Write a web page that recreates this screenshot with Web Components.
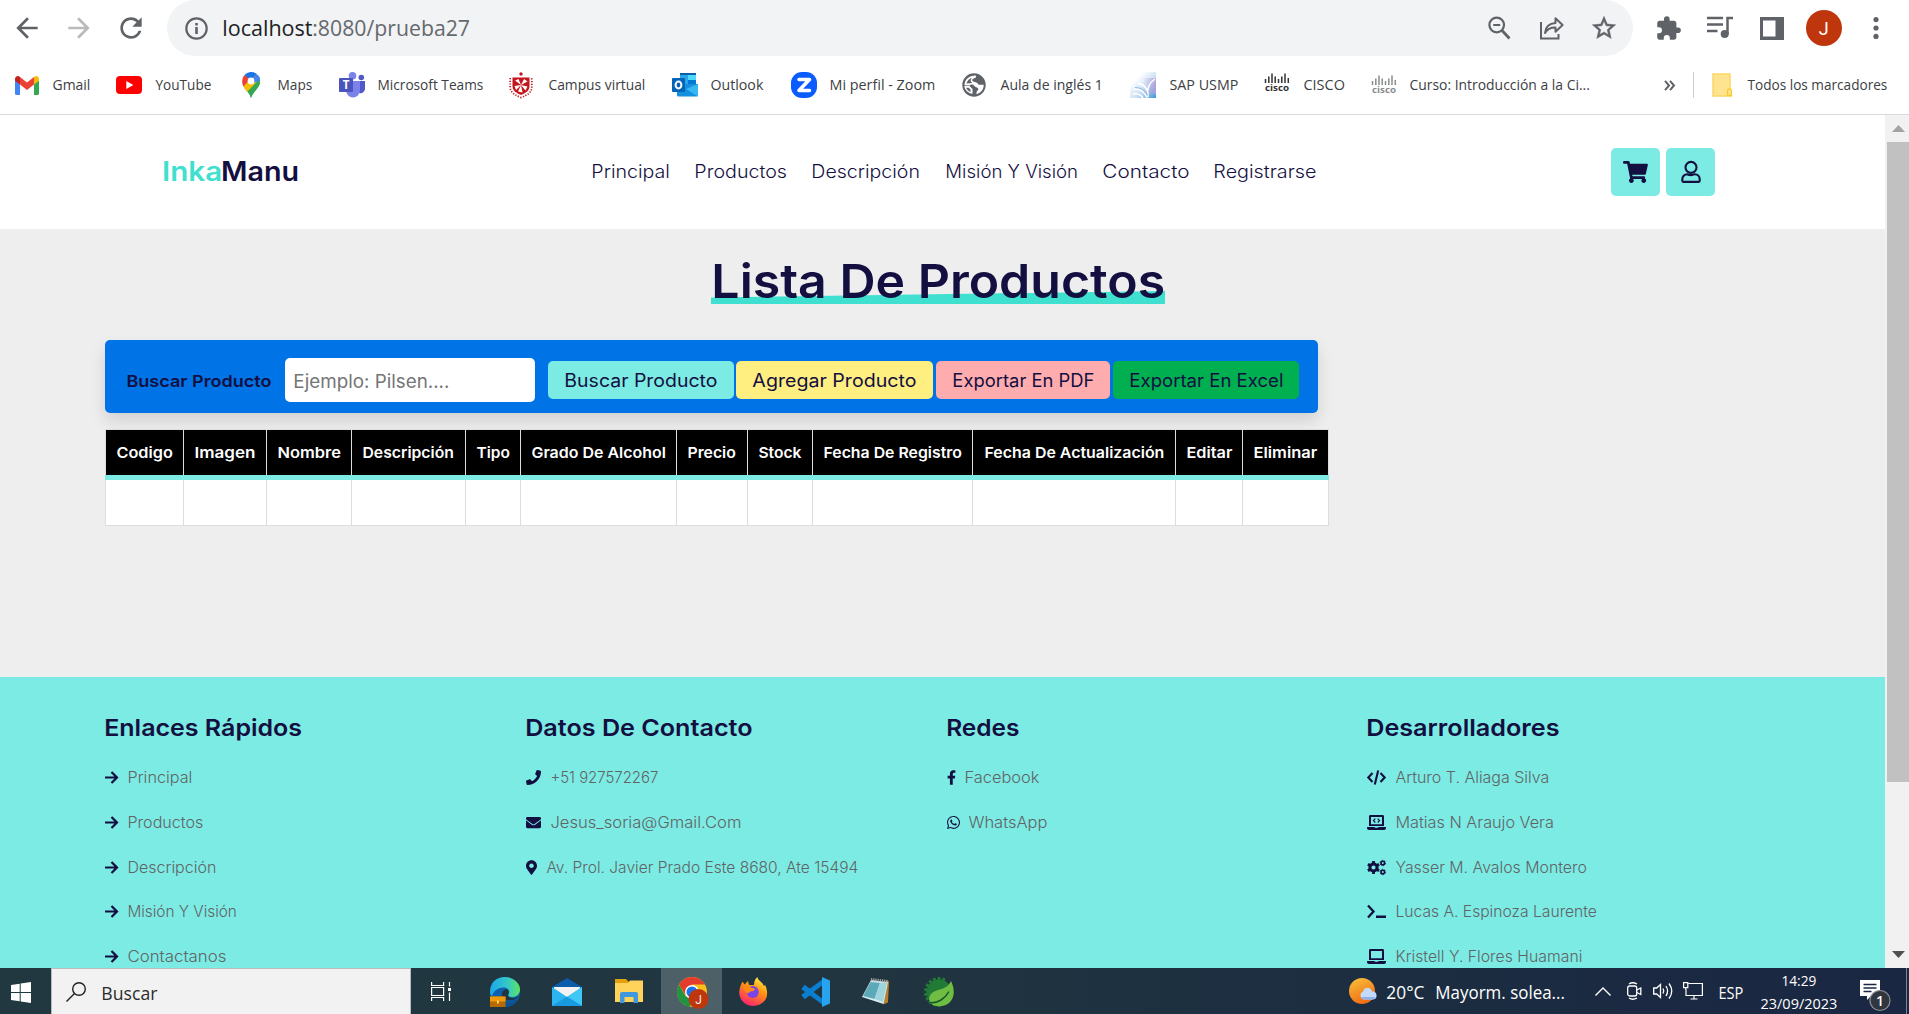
<!DOCTYPE html>
<html lang="es">
<head>
<meta charset="utf-8">
<title>InkaManu - Lista de productos</title>
<style>
html,body{margin:0;padding:0;height:100%;overflow:hidden;background:#fff}
</style>
</head>
<body>
<desktop-screen></desktop-screen>
<script>
const svg=(w,h,vb,body,extra='')=>`<svg width="${w}" height="${h}" viewBox="${vb}" ${extra} style="display:block;overflow:visible">${body}</svg>`;
const t=(w,text,style='')=>`<fit-text w="${w}" style="${style}">${text}</fit-text>`;
/* lays out [start, width, html] entries in a flex row, spacing each from the previous one */
const row=(items,from=0)=>{let end=from;return items.map(([x,w,html])=>{const m=x-end;end=x+w;return `<div style="flex:none;margin-left:${m.toFixed(2)}px;width:${w}px">${html}</div>`}).join('')};
const define=(name,css,html)=>customElements.define(name,class extends HTMLElement{
  connectedCallback(){ if(this.shadowRoot) return;
    this.attachShadow({mode:'open'}).innerHTML=`<style>*{box-sizing:border-box}${css}</style>${typeof html==='function'?html(this):html}`;}
});

/* one line of text whose glyphs are stretched or narrowed to the given width */
customElements.define('fit-text',class extends HTMLElement{
  connectedCallback(){ if(this.shadowRoot) return;
    const r=this.attachShadow({mode:'open'});
    r.innerHTML=`<style>:host{display:block;white-space:nowrap;flex:none}span{display:inline-block;white-space:pre;transform-origin:0 50%}</style><span><slot></slot></span>`;
    const w=parseFloat(this.getAttribute('w')),s=r.querySelector('span');
    this.style.width=w+'px';
    const size=parseFloat(getComputedStyle(this).fontSize),bear=size*.035;
    const nat=s.getBoundingClientRect().width;
    s.style.transform=`translateX(${-bear}px) scaleX(${((w+bear*1.7)/nat).toFixed(4)})`;
  }
});

/* ---------- browser toolbar ---------- */
const G='#5f6368';
const back='M20 11H7.83l5.59-5.59L12 4l-8 8 8 8 1.41-1.41L7.83 13H20v-2z';
define('browser-toolbar',`
:host{display:flex;height:56px;align-items:center;background:#fff;font-family:"Open Sans",sans-serif}
.pill{display:flex;align-items:center;flex:none;margin-left:20px;width:1466px;height:56px;border-radius:28px;background:#f1f3f4}
.url{display:flex;font-size:21.500px;line-height:30px;color:#202124}
.avatar{width:36px;height:36px;border-radius:50%;background:#bf360c;color:#fff;display:flex;align-items:center;justify-content:center;font:18px Roboto,sans-serif}
`,`
${row([
 [10.5,32,svg(32,32,'0 0 24 24',`<path fill="${G}" d="${back}"/>`)],
 [62.5,32,svg(32,32,'0 0 24 24',`<path fill="#bababa" transform="matrix(-1 0 0 1 24 0)" d="${back}"/>`)],
 [115,32,svg(32,32,'0 0 24 24',`<path fill="${G}" d="M17.65 6.35C16.2 4.9 14.21 4 12 4c-4.42 0-7.99 3.58-7.99 8s3.57 8 7.99 8c3.73 0 6.84-2.55 7.73-6h-2.08c-.82 2.33-3.04 4-5.65 4-3.31 0-6-2.69-6-6s2.69-6 6-6c1.66 0 3.14.69 4.22 1.78L13 11h7V4l-2.35 2.35z"/>`)]
])}
<div class="pill">${row([
 [185,23,svg(23,23,'0 0 23 23',`<circle cx="11.5" cy="11.5" r="10.2" fill="none" stroke="${G}" stroke-width="2.2"/><path fill="${G}" d="M10.2 10h2.6v7h-2.6zM10.2 6h2.6v2.5h-2.6z"/>`)],
 [222.5,247,`<div class="url">${t(89,'localhost')}${t(156.5,':8080/prueba27','color:#65696d;margin-left:1px')}</div>`],
 [1488,23,svg(23,24,'0 0 23 24',`<circle cx="8.7" cy="9" r="7.3" fill="none" stroke="${G}" stroke-width="2.2"/><path d="M14 14.5l7.5 8" stroke="${G}" stroke-width="2.8"/><path d="M5.2 9h7" stroke="${G}" stroke-width="2"/>`)],
 [1539,25,svg(25,24,'0 0 25 24',`<path d="M2 6v16.5h17.5V18" fill="none" stroke="${G}" stroke-width="2"/><path d="M6 17c.5-6.5 4-9.5 10.500-10V2.200L23.600 9l-7.100 6.800v-4.300c-5-.2-8.200 1.700-10.500 5.500z" fill="none" stroke="${G}" stroke-width="2" stroke-linejoin="round"/>`)],
 [1589.5,28,svg(28,28,'0 0 24 24',`<path fill="${G}" stroke="${G}" stroke-width=".4" d="M22 9.240l-7.190-.62L12 2 9.190 8.630 2 9.240l5.460 4.730L5.820 21 12 17.270 18.180 21l-1.630-7.030L22 9.240zM12 15.400l-3.760 2.270 1-4.280-3.320-2.880 4.380-.38L12 6.100l1.710 4.040 4.380.38-3.320 2.880 1 4.280L12 15.400z"/>`)]
],167)}</div>
${row([
 [1654.5,27,svg(27,27,'0 0 24 24',`<path fill="${G}" d="M20.5 11H19V7c0-1.100-.9-2-2-2h-4V3.500a2.500 2.500 0 0 0-5 0V5H4c-1.100 0-2 .9-2 2v3.800h1.500a2.700 2.700 0 0 1 0 5.400H2V20c0 1.100.9 2 2 2h3.800v-1.500a2.700 2.700 0 0 1 5.400 0V22H17c1.100 0 2-.9 2-2v-4h1.500a2.500 2.500 0 0 0 0-5z"/>`)],
 [1707,26,svg(26,22,'0 0 26 22',`<path d="M0 1h16M0 7.500h16M0 14h10.500" stroke="${G}" stroke-width="2.500"/><circle cx="17.700" cy="17" r="4" fill="${G}"/><path d="M20.500 17.500V1H26" fill="none" stroke="${G}" stroke-width="2.500"/>`)],
 [1760,24,svg(24,23,'0 0 24 23',`<path fill="${G}" fill-rule="evenodd" d="M0 0h24v23H0zM3 3.500v16h12.500v-16z"/>`)],
 [1805.7,36,`<div class="avatar">J</div>`],
 [1873,6,svg(6,22,'0 0 6 22',`<g fill="${G}"><circle cx="3" cy="2.600" r="2.600"/><circle cx="3" cy="11" r="2.600"/><circle cx="3" cy="19.400" r="2.600"/></g>`)]
],1633)}`);

/* ---------- bookmarks ---------- */
define('bookmark-item',`
:host{display:flex;align-items:center;flex:none}
.i{width:26px;height:26px;margin-right:13px;flex:none}
`,`<div class="i"><slot name="icon"></slot></div><slot></slot>`);
const cisco=c=>svg(26,26,'0 0 26 26',`<path stroke="${c}" stroke-width="1.500" d="M1.500 7v4M4.800 4.500v6.500M8 1.500V11M11.200 4.500v6.500M14.500 7v4M17.800 4.500v6.500M21 1.500V11M24.300 6v5"/><text x="13" y="19" font-family="Open Sans,sans-serif" font-size="9.500" font-weight="700" fill="${c}" text-anchor="middle" textLength="24" lengthAdjust="spacingAndGlyphs">cisco</text>`);
const bms=[
 [14,53,37,'Gmail',svg(26,26,'0 0 26 26','<path fill="#4285f4" d="M1 7v14.500a1.500 1.500 0 0 0 1.500 1.500H6V11z"/><path fill="#34a853" d="M25 7v14.500a1.500 1.500 0 0 1-1.500 1.500H20V11z"/><path fill="#ea4335" d="M6 5l7 5.500L20 5v7.500L13 18l-7-5.500z"/><path fill="#c5221f" d="M1 7.200C1 4.500 3.800 3 6 4.900v7.600L1 8.800z"/><path fill="#fbbc04" d="M25 7.200c0-2.700-2.800-4.200-5-2.300v7.600l5-3.700z"/>')],
 [116,156,55,'YouTube',svg(26,26,'0 0 26 26','<rect y="4" width="26" height="18" rx="4" fill="#f00"/><path fill="#fff" d="M10.300 9v8l7-4z"/>')],
 [238,278,34,'Maps',svg(26,26,'0 0 26 26','<path fill="#34a853" d="M13 26c-1-5-5-7-7.500-11.500L18 2c6 4 4.500 10 1.500 14-2.500 3.500-5 5-6.500 10z"/><path fill="#fbbc04" d="M5.500 14.500l11-12 5 5L9.200 20z"/><path fill="#34a853" d="M21.800 7c.8 4-.8 7-2.300 9-2.500 3.500-5 5-6.500 10-.6-2.600-2-4.400-3.600-6.200z"/><path fill="#4285f4" d="M13 9.500L18.500 2c2.500 1.500 3.800 4 3.500 6.500L13 12z"/><path fill="#1a73e8" d="M6.500 3A9 9 0 0 1 18.600 1.800L12 10z"/><path fill="#ea4335" d="M6.500 3l5.500 4.500-6.500 7C3.300 10.500 4 6 6.500 3z"/><circle cx="13" cy="9" r="3.400" fill="#fff"/>')],
 [339,378,105,'Microsoft Teams',svg(26,26,'0 0 26 26','<circle cx="22.300" cy="5.500" r="2.800" fill="#5059c9"/><path fill="#5059c9" d="M18 9h8v8a4.500 4.500 0 0 1-7 3.500z"/><circle cx="13.500" cy="3.800" r="3.800" fill="#7b83eb"/><path fill="#7b83eb" d="M7 9h14v9a7 7.500 0 0 1-14 0z"/><rect y="6" width="14" height="14" rx="1" fill="#4b53bc"/><text x="7" y="17" font-family="Open Sans,sans-serif" font-size="11.500" font-weight="700" text-anchor="middle" fill="#fff">T</text>')],
 [508,549,96,'Campus virtual',svg(26,26,'0 0 26 26','<circle cx="13" cy="2" r="1.700" fill="#c4161c"/><path fill="#c4161c" d="M4.500 5.500h17V14c0 5-4 7-8.500 9-4.500-2-8.500-4-8.500-9z"/><path fill="#fff" d="M13 13L7 8.500 10.500 7zM13 13l3-6 3.500 2.500zM13 13l6.500 1.500-2 4zM13 13l1.500 7.500-4.500-1zM13 13l-5 5-1.500-4z"/><path d="M2.200 6v9c0 5 4 8 10.800 10.500C20 23 23.800 20 23.800 15V6" fill="none" stroke="#c4161c" stroke-width="1.700" stroke-dasharray="1.200 1.500"/>')],
 [672,711,52,'Outlook',svg(26,26,'0 0 26 26','<path fill="#0a5fab" d="M8 1h16v7H8z"/><path fill="#28a8ea" d="M8 3h8v9H8z"/><path fill="#50d9ff" d="M16 3h8v5h-8z"/><path fill="#0078d4" d="M16 8h8v6l-8 3z"/><path fill="#1490df" d="M5 12h21v11a1.500 1.500 0 0 1-1.500 1.500H6.500A1.500 1.500 0 0 1 5 23z"/><path fill="#35b8f1" d="M26 12v12.500L14 17z"/><rect y="6" width="13" height="14" rx="1" fill="#0364b8"/><ellipse cx="6.500" cy="13" rx="2.900" ry="3.400" fill="none" stroke="#fff" stroke-width="2"/>')],
 [791,830,105,'Mi perfil - Zoom',svg(26,26,'0 0 26 26','<rect width="26" height="26" rx="11" fill="#0b5cff"/><path fill="none" stroke="#fff" stroke-width="3.600" stroke-linejoin="round" stroke-linecap="round" d="M8 7.500h10.500L8 18.500h10.500"/>')],
 [961,1000.5,101.5,'Aula de inglés 1',svg(26,26,'0 0 26 26','<circle cx="13" cy="13" r="11.700" fill="#5f6368"/><path fill="#fff" d="M15 3.600c.6 2.200-1.200 2.800-2.600 3.200-1.800.5-1.200 2.200-.2 2.700 2.200 1 4.600.8 5.300 3.300h5.200c.2 4.500-3 8.300-7 9.400-.5-1.500-.2-2.600 1-3.700 1.300-1.500.4-3-1.500-3.300-1.700-.3-1.800-1.700-3-2.400-1.800-.7-2.700-.2-3.500.7l-5.200-.2C3.500 8 7.500 3.500 15 3.600z"/><path fill="#5f6368" d="M5.500 11.500c.8-3 3-5 5.500-5.700-2 2-1.500 4.500.5 5.200z"/><path fill="#fff" d="M3.300 14h5.200l3 3v4.800c-4.500-.6-7.700-3.800-8.200-7.800z"/><path fill="#5f6368" d="M5.200 15.800h2.500l1.800 1.700v2.500c-2-.7-3.600-2.200-4.300-4.200z"/>')],
 [1130,1169.5,68,'SAP USMP',svg(26,26,'0 0 26 26','<defs><linearGradient id="s" x1="0" y1="0" x2="1" y2="1"><stop offset=".25" stop-color="#fff"/><stop offset=".6" stop-color="#cbdff3"/><stop offset="1" stop-color="#3a97d4"/></linearGradient><linearGradient id="p" x1="0" y1="0" x2="1" y2="0"><stop offset=".5" stop-color="#b79adb" stop-opacity="0"/><stop offset="1" stop-color="#b79adb" stop-opacity=".75"/></linearGradient></defs><path fill="url(#s)" d="M0 0h26v26H0z"/><path fill="url(#p)" d="M0 6h26v16H0z"/><path d="M4 17q9-1 13 9M8 11q11 3 10 14M25 7q-9 6-7 17M3 22q7-1 10 4" fill="none" stroke="#fff" stroke-width="1.500"/><path d="M5 15.500q9 0 13 8" fill="none" stroke="#8fb4e6"/>')],
 [1264,1304,40.5,'CISCO',cisco('#333')],
 [1370.5,1409.7,179.5,'Curso: Introducción a la Ci...',`<div style="opacity:.65;margin-top:2px">${cisco('#4b4f54')}</div>`]
];
define('bookmarks-bar',`
:host{display:flex;align-items:center;height:59px;border-bottom:1px solid #d9dadc;background:#fff;font:14.500px/24px "Open Sans",sans-serif;color:#3c4043}
.sep{width:1px;height:26px;background:#ccced1}
`,row([
 ...bms.map(([x,tx,w,label,ic])=>[x,tx-x+w,`<bookmark-item><div slot="icon">${ic}</div>${t(w,label,`margin-left:${tx-x-39}px`)}</bookmark-item>`]),
 [1664,11,svg(11,11,'0 0 11 11',`<path d="M1 .8l4 4.700-4 4.700M6 .8l4 4.700-4 4.700" fill="none" stroke="${G}" stroke-width="2"/>`)],
 [1693,1,'<div class="sep"></div>'],
 [1712,20,svg(20,24,'0 0 20 24','<path fill="#ffe48f" stroke="#fdd663" stroke-width="1.500" d="M1 1h17v15.500l1 1V23H1z"/><path fill="#ffe48f" stroke="#fbc935" stroke-width="1.300" d="M15.500 22.500v-5l1-1.500h2l1 1.500v5z"/>')],
 [1748.3,139,t(139,'Todos los marcadores')]
]));

/* ---------- site ---------- */
define('site-header',`
:host{display:flex;align-items:center;height:114px;background:#fff;color:#130f40;font-family:Inter,sans-serif}
.logo{display:flex;font-size:26.500px;font-weight:600;line-height:38px;margin-bottom:2px}
.nav{font-size:18px;font-weight:300;line-height:28px}
.btn{width:49px;height:48px;border-radius:5px;background:#7cebe4;display:flex;align-items:center;justify-content:center}
`,row([
 [162.5,137,`<div class="logo">${t(58.5,'Inka','color:#40e0d0')}${t(76.5,'Manu','margin-left:.5px')}</div>`],
 ...[[591.5,77.5,'Principal'],[695,91.5,'Productos'],[812,107.5,'Descripción'],[945.5,131.5,'Misión Y Visión'],[1102.5,86,'Contacto'],[1214,102,'Registrarse']].map(([x,w,s])=>[x,w,`<div class="nav">${t(w,s)}</div>`]),
 [1611,49,`<div class="btn">${svg(25,22,'0 0 576 512','<path fill="#130f40" d="M528.12 301.319l47.273-208C578.806 78.301 567.391 64 551.99 64H159.208l-9.166-44.810C147.758 8.021 137.930 0 126.529 0H24C10.745 0 0 10.745 0 24v16c0 13.255 10.745 24 24 24h69.883l70.248 343.435C147.325 417.100 136 435.222 136 456c0 30.928 25.072 56 56 56s56-25.072 56-56c0-15.674-6.447-29.835-16.824-40h209.647C430.447 426.165 424 440.326 424 456c0 30.928 25.072 56 56 56s56-25.072 56-56c0-22.172-12.888-41.332-31.579-50.405l5.517-24.276c3.413-15.018-8.002-29.319-23.403-29.319H218.117l-6.545-32h293.145c11.206 0 20.920-7.754 23.403-18.681z"/>')}</div>`],
 [1666,49,`<div class="btn">${svg(20,22,'0 0 20 22','<g fill="none" stroke="#130f40" stroke-width="2.100"><ellipse cx="10" cy="6.400" rx="5.500" ry="5.500"/><path d="M6.300 13.200c2.500 1.300 5 1.300 7.400 0 3 0 5 2.300 5 5v1.500a1.200 1.200 0 0 1-1.200 1.200H2.500a1.200 1.200 0 0 1-1.200-1.200v-1.500c0-2.700 2-5 5-5z"/></g>')}</div>`]
]));

const cols=[[105,183,116.5,172,'Codigo'],[183,266,195,255,'Imagen'],[266,351,277.5,340,'Nombre'],[351,465,363,453.5,'Descripción'],[465,520,477,509.5,'Tipo'],[520,676,532,665.5,'Grado De Alcohol'],[676,747,688,735.5,'Precio'],[747,812,759,801,'Stock'],[812,972,824,961.5,'Fecha De Registro'],[972,1175,984.5,1163.5,'Fecha De Actualización'],[1175,1242,1186.5,1231.5,'Editar'],[1242,1328,1254,1317,'Eliminar']];
define('product-table',`
:host{display:block;width:1224px;margin:16px 0 0 105px;border:1px solid #ddd;font:600 15px/45px Inter,sans-serif;color:#fff}
.h,.b{display:flex}.h{background:#000;height:45px}.line{height:5px;background:#7cebe4;margin:0 -1px}.b{background:#fff;height:45px}
.c{flex:none;border-right:1px solid #ddd;height:45px}.c:last-child{border-right:0}
`,`<div class="h">${cols.map(([a,b,x,e,s])=>`<div class="c" style="width:${b-a}px;padding-left:${x-a-1}px">${t(e-x,s)}</div>`).join('')}</div><div class="line"></div><div class="b">${cols.map(([a,b])=>`<div class="c" style="width:${b-a}px"></div>`).join('')}</div>`);

define('search-panel',`
:host{display:flex;align-items:center;width:1213px;height:73px;margin:36px 0 0 105px;padding-top:7px;background:#0073e6;border-radius:5px;box-shadow:0 8px 16px rgba(0,0,0,.12);color:#130f40;font:18px/28px Inter,sans-serif}
.in{height:44px;border-radius:5px;background:#fff;color:#757575;display:flex;align-items:center;padding:2px 0 0 9px;font-size:18.500px}
.bt{height:38px;padding-top:2px;border-radius:5px;display:flex;align-items:center;justify-content:center;font-weight:400}
`,row([
 [127,144,t(144,'Buscar Producto','font-size:16.500px;font-weight:600;margin-top:1px')],
 [285,250,`<div class="in">${t(155,'Ejemplo: Pilsen....')}</div>`],
 [548,186,`<div class="bt" style="background:#7cebe4">${t(152,'Buscar Producto')}</div>`],
 [736,197,`<div class="bt" style="background:#ffee80">${t(163,'Agregar Producto')}</div>`],
 [936,174,`<div class="bt" style="background:#ffacae">${t(141,'Exportar En PDF')}</div>`],
 [1113,186,`<div class="bt" style="background:#00b050">${t(153,'Exportar En Excel')}</div>`]
],105));

define('page-title',`
:host{display:flex;justify-content:center;width:454px;margin:0 0 0 711px;padding-top:24px;height:75px;font:600 47px/56px Inter,sans-serif;color:#130f40}
.u{background:#40e0d0;height:13px;width:454px;clip-path:polygon(0 50%,100% 0,100% 100%,0 100%);margin-top:38px}
.g{display:grid}.g>*{grid-area:1/1}
fit-text{z-index:1}
`,`<div class="g"><div class="u"></div>${t(451,'Lista De Productos','margin-left:1.500px')}</div>`);

/* ---------- footer ---------- */
const N='#130f40';
const ic={
 arrow:[13,13,'0 0 13 13',`<path d="M0 6.500h11.500M6.500 1l5.500 5.500L6.500 12" fill="none" stroke="${N}" stroke-width="2.200"/>`],
 phone:[15,15,'0 0 512 512',`<path fill="${N}" d="M493.4 24.600l-104-24c-11.300-2.600-22.900 3.300-27.500 13.900l-48 112c-4.200 9.800-1.400 21.300 6.900 28l60.600 49.600c-36 76.700-98.900 140.500-177.200 177.200l-49.600-60.600c-6.800-8.300-18.200-11.100-28-6.900l-112 48C3.900 366.500-2 378.100.6 389.400l24 104C27.100 504.200 36.700 512 48 512c256.100 0 464-207.500 464-464 0-11.200-7.700-20.900-18.600-23.400z"/>`],
 mail:[15,15,'0 0 512 512',`<path fill="${N}" d="M502.3 190.800c3.900-3.100 9.700-.2 9.700 4.700V400c0 26.500-21.500 48-48 48H48c-26.500 0-48-21.500-48-48V195.600c0-5 5.700-7.800 9.700-4.700 22.400 17.400 52.100 39.500 154.100 113.600 21.100 15.400 56.700 47.800 92.200 47.600 35.700.3 72-32.800 92.300-47.600 102-74.100 131.600-96.300 154-113.700zM256 320c23.200.4 56.600-29.200 73.400-41.400 132.700-96.300 142.800-104.700 173.400-128.700 5.800-4.500 9.200-11.500 9.200-18.900v-19c0-26.500-21.500-48-48-48H48c-26.500 0-48 21.500-48 48v19c0 7.400 3.400 14.300 9.200 18.900 30.600 23.900 40.700 32.400 173.400 128.700 16.800 12.200 50.200 41.800 73.400 41.400z"/>`],
 pin:[11,15,'0 0 384 512',`<path fill="${N}" fill-rule="evenodd" d="M172.268 501.670C26.970 291.031 0 269.413 0 192 0 85.961 85.961 0 192 0s192 85.961 192 192c0 77.413-26.970 99.031-172.268 309.670-9.535 13.774-29.930 13.773-39.464 0zM192 272c44.183 0 80-35.817 80-80s-35.817-80-80-80-80 35.817-80 80 35.817 80 80 80z"/>`],
 fb:[9,15,'0 0 320 512',`<path fill="${N}" d="M279.14 288l14.220-92.660h-88.910v-60.130c0-25.350 12.420-50.060 52.240-50.060h40.420V6.260S260.430 0 225.360 0c-73.220 0-121.080 44.380-121.080 124.720v70.620H22.890V288h81.390v224h100.170V288z"/>`],
 wa:[13,15,'0 0 448 512',`<path fill="${N}" d="M380.9 97.100C339 55.100 283.200 32 223.900 32c-122.400 0-222 99.600-222 222 0 39.100 10.200 77.300 29.600 111L0 480l117.700-30.900c32.400 17.700 68.900 27 106.100 27h.1c122.300 0 224.100-99.600 224.100-222 0-59.300-25.200-115-67.100-157zm-157 341.600c-33.200 0-65.700-8.900-94-25.700l-6.700-4-69.800 18.300L72 359.200l-4.400-7c-18.500-29.400-28.200-63.300-28.200-98.200 0-101.700 82.800-184.500 184.600-184.500 49.300 0 95.600 19.200 130.400 54.100 34.800 34.900 56.200 81.200 56.100 130.500 0 101.800-84.900 184.600-186.600 184.600zm101.200-138.200c-5.500-2.800-32.800-16.200-37.900-18-5.100-1.900-8.800-2.800-12.500 2.800-3.700 5.600-14.300 18-17.600 21.800-3.200 3.700-6.500 4.200-12 1.400-32.600-16.300-54-29.100-75.500-66-5.700-9.800 5.700-9.100 16.300-30.300 1.800-3.700.9-6.900-.5-9.700-1.400-2.800-12.500-30.100-17.100-41.200-4.500-10.800-9.100-9.300-12.500-9.500-3.200-.2-6.900-.2-10.600-.2-3.700 0-9.700 1.400-14.800 6.900-5.100 5.600-19.400 19-19.400 46.300 0 27.300 19.900 53.700 22.600 57.400 2.800 3.700 39.100 59.700 94.800 83.800 35.200 15.200 49 16.500 66.600 13.900 10.700-1.600 32.800-13.400 37.400-26.400 4.600-13 4.600-24.100 3.200-26.400-1.300-2.500-5-3.900-10.500-6.600z"/>`],
 code:[19,15,'0 0 19 15',`<path d="M5.500 3L1.300 7.500 5.500 12M13.500 3l4.200 4.500-4.200 4.500M11.200.5L7.800 14.500" fill="none" stroke="${N}" stroke-width="2.100"/>`],
 lapcode:[19,15,'0 0 19 15',`<path fill="${N}" fill-rule="evenodd" d="M3.500 0h12A1.400 1.400 0 0 1 17 1.400V11H2V1.400A1.400 1.400 0 0 1 3.500 0zM4 2v7.200h11V2zM0 12h7.500l.5.800h3l.5-.8H19v1a2 2 0 0 1-2 2H2a2 2 0 0 1-2-2z"/><path d="M8.300 3.700L6.500 5.600l1.800 1.900M10.700 3.700l1.800 1.900-1.800 1.900" fill="none" stroke="${N}" stroke-width="1.200"/>`],
 cogs:[19,15,'0 0 19 15',`<circle cx="6.500" cy="7.500" r="3.600" fill="none" stroke="${N}" stroke-width="3"/><path stroke="${N}" stroke-width="2.800" d="M6.500 1v2.500M6.500 11.500V14M.9 4.200L3 5.500M10 9.500l2.100 1.300M.9 10.800L3 9.500M10 5.500l2.100-1.300"/><g fill="none" stroke="${N}"><circle cx="15.800" cy="3" r="1.800" stroke-width="1.600"/><circle cx="15.800" cy="12" r="1.800" stroke-width="1.600"/><circle cx="15.800" cy="3" r="2.700" stroke-width="1" stroke-dasharray="1.400 1.420"/><circle cx="15.800" cy="12" r="2.700" stroke-width="1" stroke-dasharray="1.400 1.420"/></g>`],
 term:[19,15,'0 0 19 15',`<path d="M1 1.500l5.500 6L1 13.500" fill="none" stroke="${N}" stroke-width="2.300"/><path fill="${N}" d="M9 11.500h10V14H9z"/>`],
 lap:[19,15,'0 0 19 15',`<path fill="${N}" fill-rule="evenodd" d="M3.500 0h12A1.400 1.400 0 0 1 17 1.400V11H2V1.400A1.400 1.400 0 0 1 3.500 0zM4 2v7.200h11V2zM0 12h7.500l.5.800h3l.5-.8H19v1a2 2 0 0 1-2 2H2a2 2 0 0 1-2-2z"/>`]
};
const L={
 a:[196.5,'Enlaces Rápidos',[['arrow',23,64,'Principal'],['arrow',23,75,'Productos'],['arrow',23,88,'Descripción'],['arrow',23,108.5,'Misión Y Visión'],['arrow',23,98,'Contactanos']]],
 b:[226,'Datos De Contacto',[['phone',25,107,'+51 927572267'],['mail',25,190,'Jesus_soria@Gmail.Com'],['pin',21,311,'Av. Prol. Javier Prado Este 8680, Ate 15494']]],
 c:[72,'Redes',[['fb',18.5,74,'Facebook'],['wa',22.5,78,'WhatsApp']]],
 d:[192,'Desarrolladores',[['code',28.5,153,'Arturo T. Aliaga Silva'],['lapcode',28.5,157.5,'Matias N Araujo Vera'],['cogs',28.5,190.5,'Yasser M. Avalos Montero'],['term',28.5,200.5,'Lucas A. Espinoza Laurente'],['lap',28.5,186,'Kristell Y. Flores Huamani']]]
};
define('footer-column',`
:host{display:block;color:${N};font-family:Inter,sans-serif}
.t{font-size:23.500px;font-weight:600;line-height:34px;margin-bottom:11px}
.r{display:flex;align-items:center;height:44.700px;font-size:15.500px;font-weight:300;color:#606466}
.i{flex:none}
`,el=>{const [w,h,list]=L[el.getAttribute('list')];return `<div class="t">${t(w,h)}</div>`+list.map(([k,tx,tw,s])=>`<div class="r"><div class="i" style="width:${tx}px">${svg(...ic[k])}</div>${t(tw,s)}</div>`).join('')});
define('site-footer',`
:host{display:flex;align-items:flex-start;background:#7cebe4;height:291px;padding-top:33.500px;overflow:hidden}
`,row([[105,420.5,'<footer-column list="a"></footer-column>'],[525.5,421,'<footer-column list="b"></footer-column>'],[946.5,420.5,'<footer-column list="c"></footer-column>'],[1367,400,'<footer-column list="d"></footer-column>']]));

define('scroll-bar',`
:host{display:flex;flex-direction:column;width:24px;flex:none;background:#f1f1f1;height:853px;padding-left:2px}
.s{height:27px;display:flex;align-items:center;justify-content:center;flex:none}
.thumb{height:640px;background:#c1c1c1}.f{flex:1}
`,`<div class="s">${svg(13,7,'0 0 13 7','<path fill="#a3a3a3" d="M0 7h13L6.500 0z"/>')}</div><div class="thumb"></div><div class="f"></div><div class="s">${svg(13,7,'0 0 13 7','<path fill="#505050" d="M0 0h13L6.500 7z"/>')}</div>`);

define('site-page',`
:host{display:flex;height:853px;background:#fff}
.p{width:1885px;flex:none;height:853px;display:flex;flex-direction:column}
.m{height:448px;background:#eee}
`,`<div class="p"><site-header></site-header><div class="m"><page-title></page-title><search-panel></search-panel><product-table></product-table></div><site-footer></site-footer></div><scroll-bar></scroll-bar>`);

/* ---------- taskbar ---------- */
const gear=Array.from({length:11},(_,i)=>`<rect x="13.500" y="0" width="3" height="5" transform="rotate(${180+i*20} 15 15)"/>`).join('');
define('task-bar',`
:host{display:flex;align-items:center;height:46px;background:linear-gradient(90deg,#213840,#203540 45%,#1b2b41 80%,#1a2743);font:18px/26px "Open Sans",sans-serif;color:#fff}
.search{display:flex;align-items:center;width:360px;height:46px;background:#f2f2f2;border:1px solid #b9bcbd;border-bottom:0;color:#2b2b2b}
.act{display:flex;align-items:center;justify-content:center;height:46px;background:#4d5f67}
.clock{font-size:14.500px;line-height:23px;height:46px;display:flex;flex-direction:column;align-items:center;padding-top:1px}
`,row([
 [11,20,svg(20,21,'0 -1 20 21','<path fill="#fff" d="M0 3l8.700-1.300v8.200H0zM9.700 1.500L20 0v9.900H9.700zM0 11h8.700v8.200L0 18zM9.700 11H20v10L9.700 19.400z"/>')],
 [51,360,`<div class="search">${row([[66,20,svg(20,20,'0 0 20 20','<circle cx="13" cy="7" r="6.300" fill="none" stroke="#222" stroke-width="1.400"/><path d="M8.500 11.500L.5 19.500" stroke="#222" stroke-width="1.400"/>')],[102,55,t(55,'Buscar','margin-top:2px')]],52)}</div>`],
 [431,20,svg(20,19,'0 0 20 19','<g fill="none" stroke="#fff" stroke-width="1.200"><path d="M.6 0v3.500h12V0M.6 5.500h12v8H.6zM.6 19v-3.500h12V19M18.500 0v4.500M18.500 10.500V19"/></g><path fill="#fff" d="M17 6h3v3h-3z"/>')],
 [490,30,svg(30,30,'0 -1 30 30','<defs><linearGradient id="e" x1="0" y1=".5" x2="1" y2=".5"><stop offset="0" stop-color="#1ba7ea"/><stop offset=".6" stop-color="#35c9c5"/><stop offset="1" stop-color="#5de35d"/></linearGradient></defs><circle cx="15" cy="15" r="15" fill="#0f5fae"/><path fill="url(#e)" d="M0 15C0 5 7 0 15 0s15 6 15 12.500c0 5-4 7.500-8 7.500-3 0-4.500-1-3.500-2.500 2-3 0-7-5-7C7 10.500 3 15 2 19 .5 18 0 16.500 0 15z"/><path fill="#203540" d="M12 16c1-3 4-5 6-3 1.500 2 0 4 0 5.500 1 3 6 3.500 9 1.500l2.500-1c-4 5-11 5-15 3-2-1.500-3-4-2.500-6z"/><path fill="#0d5296" d="M15 22c5 3 10 1 13 0-3 6-8 8-13 8z"/><rect y="19.500" width="15.500" height="10.500" fill="#b66a00"/><rect y="19.500" width="15.500" height="5" fill="#f09a0b"/><rect x="7" y="23.500" width="1.700" height="3" fill="#ffe07a"/>')],
 [552,30,svg(30,28,'0 -1 30 28','<path fill="#0b5cab" d="M0 9L15 0l15 9v8H0z"/><path fill="#f2f2f2" d="M2 9h26v8L15 20 2 16z"/><path fill="#2cb5f0" d="M0 9l15 10L30 9v19H0z"/><path fill="#1899e0" d="M0 28l15-9.500L30 28z"/><path fill="#3fc7f5" d="M30 9v18.500L15.500 18.700z"/>')],
 [615,28,svg(28,24,'0 0 28 24','<path fill="#e3a008" d="M0 0h11l3 3v5H0z"/><path fill="#ffd25a" d="M0 4h13l2-2.500h13V23H0z"/><path fill="#3f98dd" d="M5 24V14.500A2 2 0 0 1 7 13h14a2 2 0 0 1 2 1.500V24h-4.500v-6h-9v6z"/>')],
 [661,61,`<div class="act">${svg(32,32,'0 -1 32 32','<circle cx="16" cy="16" r="15" fill="#fbc116"/><path fill="#e33b2e" d="M3 8.500A15 15 0 0 1 29 8.500H16L9.500 19z"/><path fill="#229342" d="M3 8.500L9.500 20l6.500 3-2 8A15 15 0 0 1 3 8.500z"/><circle cx="16" cy="16" r="7" fill="#fff"/><circle cx="16" cy="16" r="5.500" fill="#1a73e8"/><circle cx="22.500" cy="23" r="10" fill="#bf360c"/><text x="22.500" y="27.500" font-family="Roboto,sans-serif" font-size="12" fill="#eee" text-anchor="middle">J</text>')}</div>`],
 [739,28,svg(28,29,'0 0 28 29','<defs><linearGradient id="f" x1=".8" y1="0" x2=".3" y2="1"><stop offset="0" stop-color="#fff44f"/><stop offset=".4" stop-color="#ff980e"/><stop offset="1" stop-color="#ff1f70"/></linearGradient></defs><path fill="url(#f)" d="M3.500 4.500l2 3L9 4l1 4 5 0c0-4 1.500-6.500 3.500-8 0 4 6 5 6 9l1.500-1c2.500 4 2.500 9 1.500 12.500C25 26 20 29 14 29S2 25 .5 18C-.3 13 1.500 8 3.500 4.500z"/><circle cx="13.800" cy="15" r="6" fill="#7a44e6"/><path fill="#ff8a16" d="M3 10c4-2 7-1 10 1 2 .5 3 .5 3 1.500s-3 2-5 2c-1 3-5 1-5-1z"/>')],
 [800,30,svg(30,30,'0 -1 30 30','<path fill="none" stroke="#0a7fd0" stroke-width="5.500" stroke-linejoin="round" d="M3 10l22 16M3 20L25 4"/><path fill="#29a3f0" d="M22 0l8 3.500v23L22 30z"/><path fill="#203540" d="M22 8.500v13L13.500 15z"/>')],
 [862,28,svg(28,28,'0 0 28 28','<path fill="#b9812f" d="M24 3.500l3 1-1 21-5 2z"/><path fill="#d7edf0" d="M9 3l17 2-4.500 22L0 20z"/><path fill="#5ba9b9" d="M8.500 5L18 6l-5.500 16L1 19z"/><path fill="#9ed5dc" d="M18 6l7 0-4 19-8.500-3z"/><path d="M9 2.500l17 2" stroke="#aaa" stroke-width="3" stroke-dasharray="1.200 1"/>')],
 [924,30,svg(30,30,'0 -1 30 30',`<g fill="#217a36">${gear}<circle cx="15" cy="15" r="12.500"/></g><path fill="#70bd44" d="M27 4c4 8 4 17-2 22-5 4-11 4-16 2-5-3-5-9-1-12 6-5 14-2 19-12z"/><path d="M6 25.500c8 1 15-4 19-11" fill="none" stroke="#14532a" stroke-width="1.500"/>`)],
 [1349,28,svg(28,28,'0 -1 28 28','<defs><linearGradient id="w" x1=".2" y1="0" x2=".6" y2="1"><stop offset="0" stop-color="#f8bd38"/><stop offset="1" stop-color="#f06a12"/></linearGradient></defs><circle cx="13" cy="13" r="13" fill="url(#w)"/><path fill="#c5d9fa" d="M14 21a4 4 0 0 1 0-7.500c1-5 8-5 9 0a4 4 0 0 1 1 8H14z"/><path fill="#8eb1ee" d="M12 19h14.500a4 4 0 0 1-2.500 2.500H14z"/>')],
 [1387,37,t(37,'20°C','margin-top:2px')],
 [1435.5,128.5,t(128.5,'Mayorm. solea...','margin-top:2px')],
 [1594.5,16,svg(16,9,'0 0 16 9','<path d="M.5 8.500L8 1l7.500 7.500" fill="none" stroke="#fff" stroke-width="1.400"/>')],
 [1626.5,15,svg(15,18,'0 0 15 18','<g fill="none" stroke="#fff" stroke-width="1.300"><rect x=".7" y="4" width="9" height="10" rx="2"/><path d="M9.800 8l4-2v6.500l-4-2M2 2Q5.500-.5 10 2M2 16q3.500 2.500 8 0"/></g>')],
 [1652.5,20,svg(20,18,'0 0 20 18','<g fill="none" stroke="#fff" stroke-width="1.300"><path d="M.7 6h3L7.500 2.500v13L3.700 12h-3zM10 6.500q1.500 2.500 0 5M13 4q3.200 5 0 10M16 1.500q5.500 7.500 0 15"/></g>')],
 [1683,20,svg(20,18,'0 0 20 18','<g fill="none" stroke="#fff" stroke-width="1.200"><path d="M5.500 1.500H19.400v12H3v-6M.6.600h4.200v5H.6zM2.700 5.600V7.500M11 13.500v3.500M7.500 17h7"/></g>')],
 [1718.5,24,t(24,'ESP','font-size:15.500px;margin-top:4px')],
 [1761,76,`<div class="clock">${t(34,'14:29')}${t(76,'23/09/2023')}</div>`],
 [1860,30,svg(30,28,'0 2 30 28','<path fill="#fff" d="M0 5h20v16h-9l-4 4v-4H0z"/><path d="M3.500 9.500h13M3.500 13h13M3.500 16.500h8" stroke="#1a2743" stroke-width="1.300"/><circle cx="20" cy="25.500" r="10" fill="#30363d" stroke="#8b9096" stroke-width="1.200"/><text x="20" y="30.500" font-family="Open Sans,sans-serif" font-size="14" font-weight="600" text-anchor="middle" fill="#fff">1</text>')],
 [1905.5,1,'<div style="width:1px;height:46px;background:#7c8594"></div>']
]));

define('desktop-screen',`:host{display:flex;flex-direction:column;width:1909px;height:1014px;overflow:hidden}`,
`<browser-toolbar></browser-toolbar><bookmarks-bar></bookmarks-bar><site-page></site-page><task-bar></task-bar>`);
</script>
</body>
</html>
